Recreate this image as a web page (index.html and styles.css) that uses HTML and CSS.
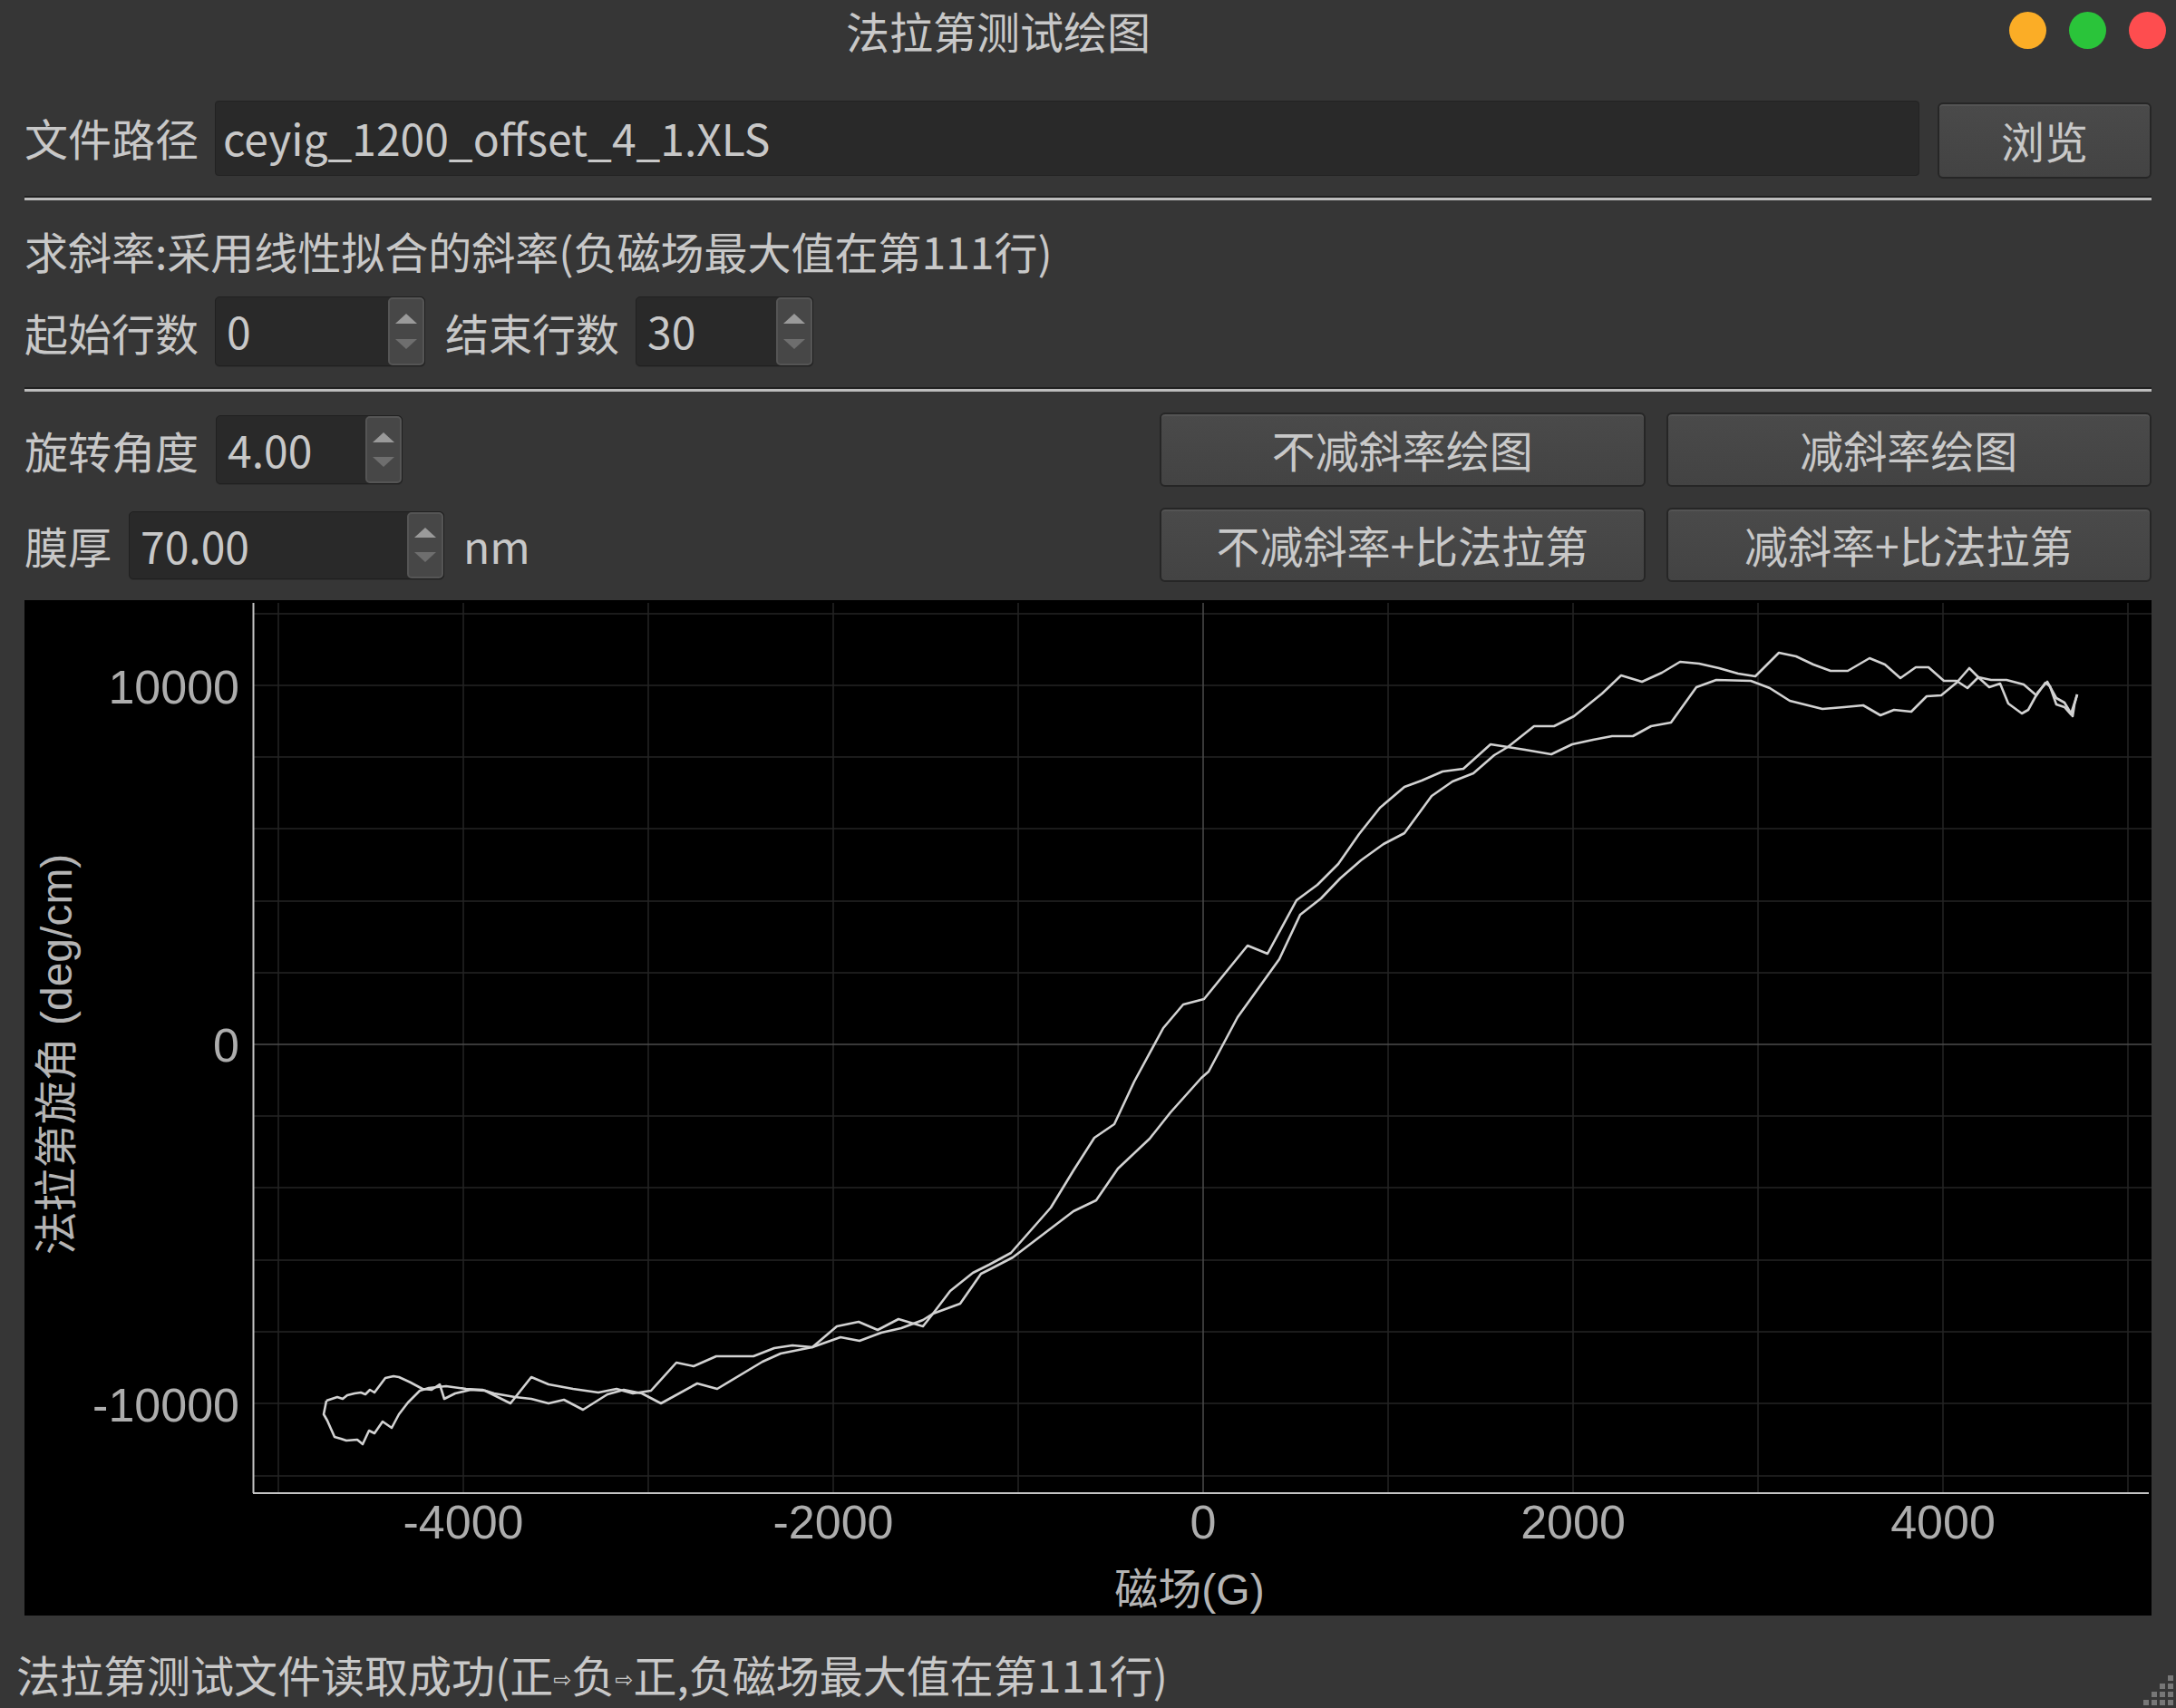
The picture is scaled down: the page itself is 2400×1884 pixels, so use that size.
FILE: index.html
```html
<!DOCTYPE html>
<html lang="zh-CN">
<head>
  <meta charset="UTF-8">
  <meta name="viewport" content="width=device-width, initial-scale=1.0">
  <title>法拉第测试绘图</title>
  <link rel="stylesheet" href="styles.css">
</head>
<body>
  <div class="window">
    <div class="titlebar">
      <div class="title">法拉第测试绘图</div>
      <div class="lights">
        <span class="light orange"></span>
        <span class="light green"></span>
        <span class="light red"></span>
      </div>
    </div>

    <div class="content">
      <div class="file-row">
        <span class="label">文件路径</span>
        <div class="path">ceyig_1200_offset_4_1.XLS</div>
        <div class="btn browse">浏览</div>
      </div>

      <div class="sep first"></div>

      <div class="slope">求斜率:采用线性拟合的斜率(负磁场最大值在第111行)</div>

      <div class="range-row">
        <span class="label">起始行数</span>
        <div class="spin w-start"><span class="val">0</span><span class="arrows"><i class="up"></i><i class="down"></i></span></div>
        <span class="label">结束行数</span>
        <div class="spin w-end"><span class="val">30</span><span class="arrows"><i class="up"></i><i class="down"></i></span></div>
      </div>

      <div class="sep second"></div>

      <div class="controls">
        <div class="params">
          <div class="param">
            <span class="label">旋转角度</span>
            <div class="spin w-angle"><span class="val">4.00</span><span class="arrows"><i class="up"></i><i class="down"></i></span></div>
          </div>
          <div class="param">
            <span class="label">膜厚</span>
            <div class="spin w-thick"><span class="val">70.00</span><span class="arrows"><i class="up"></i><i class="down"></i></span></div>
            <span class="unit">nm</span>
          </div>
        </div>
        <div class="actions">
          <div class="btn">不减斜率绘图</div>
          <div class="btn">减斜率绘图</div>
          <div class="btn">不减斜率+比法拉第</div>
          <div class="btn">减斜率+比法拉第</div>
        </div>
      </div>

      <div class="plot">
        <svg width="2346" height="1120" viewBox="27 662 2346 1120">
          <g class="grid">
            <line x1="307" y1="665" x2="307" y2="1647"/>
            <line x1="511" y1="665" x2="511" y2="1647"/>
            <line x1="715" y1="665" x2="715" y2="1647"/>
            <line x1="919" y1="665" x2="919" y2="1647"/>
            <line x1="1123" y1="665" x2="1123" y2="1647"/>
            <line x1="1531" y1="665" x2="1531" y2="1647"/>
            <line x1="1735" y1="665" x2="1735" y2="1647"/>
            <line x1="1939" y1="665" x2="1939" y2="1647"/>
            <line x1="2143" y1="665" x2="2143" y2="1647"/>
            <line x1="2347" y1="665" x2="2347" y2="1647"/>
            <line x1="279" y1="677" x2="2373" y2="677"/>
            <line x1="279" y1="756" x2="2373" y2="756"/>
            <line x1="279" y1="835" x2="2373" y2="835"/>
            <line x1="279" y1="914" x2="2373" y2="914"/>
            <line x1="279" y1="994" x2="2373" y2="994"/>
            <line x1="279" y1="1073" x2="2373" y2="1073"/>
            <line x1="279" y1="1231" x2="2373" y2="1231"/>
            <line x1="279" y1="1310" x2="2373" y2="1310"/>
            <line x1="279" y1="1390" x2="2373" y2="1390"/>
            <line x1="279" y1="1469" x2="2373" y2="1469"/>
            <line x1="279" y1="1548" x2="2373" y2="1548"/>
            <line x1="279" y1="1628" x2="2373" y2="1628"/>
          </g>
          <g class="zero">
            <line x1="1327" y1="665" x2="1327" y2="1647"/>
            <line x1="279" y1="1152" x2="2373" y2="1152"/>
          </g>
          <g class="axis">
            <line x1="279.5" y1="665" x2="279.5" y2="1647"/>
            <line x1="279" y1="1647" x2="2370" y2="1647"/>
          </g>

          <!-- 正 -> 负 -->
          <polyline class="trace" points="360,1545 366,1543 372,1541 378,1543 383,1539 391,1537 398,1536 403,1538 408,1533 413,1536 425,1520 434,1518 440,1519 453,1525 466,1532 476,1533 485,1527 490,1543 502,1537 519,1533 535,1534 563,1548 586,1519 605,1527 632,1532 660,1536 680,1532 698,1537 718,1534 746,1503 765,1507 790,1496 831,1496 854,1487 874,1484 896,1486 923,1463 947,1458 968,1467 991,1455 1018,1463 1029,1449 1048,1424 1073,1404 1091,1395 1115,1382 1159,1332 1184,1291 1207,1255 1229,1240 1251,1193 1283,1134 1305,1108 1328,1102 1376,1043 1398,1052 1430,993 1453,976 1476,953 1499,920 1522,891 1549,868 1568,861 1591,851 1614,848 1644,821 1682,827 1711,832 1734,821 1757,816 1778,812 1801,812 1821,801 1843,797 1871,758 1893,750 1931,751 1952,759 1974,773 2010,782 2034,780 2055,778 2074,789 2089,783 2108,785 2125,768 2141,767 2158,753 2172,737 2184,749 2194,758 2206,754 2215,776 2230,787 2237,783 2248,763 2258,752 2268,770 2277,775 2286,790 2288,777 2291,766"/>
          <!-- 负 -> 正 -->
          <polyline class="trace" points="360,1545 357,1560 361,1567 369,1585 376,1587 382,1589 394,1588 400,1593 407,1578 413,1581 422,1568 432,1575 440,1560 450,1547 463,1534 473,1531 492,1529 514,1532 532,1533 545,1537 568,1541 586,1543 605,1548 622,1544 643,1555 670,1538 688,1533 708,1537 729,1548 769,1526 791,1532 841,1502 861,1493 896,1486 927,1475 948,1479 972,1470 994,1465 1018,1456 1029,1449 1059,1438 1082,1405 1092,1400 1117,1387 1184,1336 1209,1324 1233,1289 1268,1256 1291,1227 1325,1189 1333,1182 1365,1122 1411,1058 1434,1009 1457,991 1478,969 1501,949 1526,931 1549,919 1579,878 1602,862 1625,853 1648,833 1663,824 1692,801 1714,801 1736,790 1767,765 1788,745 1811,752 1833,742 1853,730 1874,732 1896,737 1917,743 1936,746 1962,720 1981,724 2000,733 2019,740 2038,740 2062,726 2079,733 2096,748 2113,736 2127,736 2144,751 2158,751 2170,759 2182,747 2196,750 2213,750 2232,755 2246,767 2256,753 2261,757 2268,777 2277,780 2284,788 2291,766"/>

          <g class="ticks-y">
            <text x="264" y="776">10000</text>
            <text x="264" y="1171">0</text>
            <text x="264" y="1568">-10000</text>
          </g>
          <g class="ticks-x">
            <text x="511" y="1697">-4000</text>
            <text x="919" y="1697">-2000</text>
            <text x="1327" y="1697">0</text>
            <text x="1735" y="1697">2000</text>
            <text x="2143" y="1697">4000</text>
          </g>
          <text class="axis-title" x="1312" y="1770">磁场(G)</text>
          <text class="axis-title" transform="translate(79 1163) rotate(-90)">法拉第旋角 (deg/cm)</text>
        </svg>
      </div>
    </div>

    <div class="status">法拉第测试文件读取成功(正<span class="arrow">⇨</span>负<span class="arrow">⇨</span>正,负磁场最大值在第111行)</div>

    <svg class="grip" width="40" height="40" viewBox="0 0 40 40">
      <rect x="31" y="4" width="6" height="6"/>
      <rect x="22" y="13" width="6" height="6"/>
      <rect x="31" y="13" width="6" height="6"/>
      <rect x="13" y="22" width="6" height="6"/>
      <rect x="22" y="22" width="6" height="6"/>
      <rect x="31" y="22" width="6" height="6"/>
      <rect x="4" y="31" width="6" height="6"/>
      <rect x="13" y="31" width="6" height="6"/>
      <rect x="22" y="31" width="6" height="6"/>
      <rect x="31" y="31" width="6" height="6"/>
    </svg>
  </div>
</body>
</html>
```

FILE: styles.css
```css
* { box-sizing: border-box; }

html, body {
  margin: 0;
  padding: 0;
}

body {
  width: 2400px;
  height: 1884px;
  overflow: hidden;
  background: #363636;
  color: #c8c8c8;
  font-family: "Noto Sans CJK SC", "Liberation Sans", sans-serif;
  font-size: 48px;
}

.window {
  position: relative;
  display: flex;
  flex-direction: column;
  height: 1884px;
}

/* title bar */
.titlebar {
  display: flex;
  align-items: center;
  height: 66px;
}

.title {
  flex: 1;
  text-align: center;
  line-height: 64px;
  padding-right: 14px;
}

.lights {
  display: flex;
  gap: 25px;
  padding-right: 11px;
}

.light {
  width: 41px;
  height: 41px;
  border-radius: 50%;
}

.orange { background: #fbad26; }
.green { background: #2ac43a; }
.red { background: #fe4d4f; }

/* form */
.content {
  display: flex;
  flex-direction: column;
  padding: 0 27px;
}

.label {
  line-height: 60px;
  white-space: nowrap;
}

.file-row {
  display: flex;
  align-items: flex-start;
  gap: 18px;
  margin-top: 45px;
}

.file-row .label {
  line-height: 81px;
}

.path {
  flex: 1;
  height: 83px;
  line-height: 79px;
  padding-left: 8px;
  background: #292929;
  border: 1px solid #222;
  border-radius: 4px;
  margin-right: 2px;
}

.btn {
  display: flex;
  align-items: center;
  justify-content: center;
  height: 82px;
  padding-bottom: 2px;
  background: linear-gradient(#4a4a4a, #434343);
  border: 2px solid #262626;
  border-radius: 6px;
  box-shadow: inset 0 2px 0 #545454;
  white-space: nowrap;
}

.browse {
  width: 236px;
  height: 84px;
  margin-top: 2px;
}

.sep {
  height: 5px;
  border-top: 2px solid #1f1f1f;
  background: #bdbdbd;
}

.sep.first { margin-top: 19px; }
.sep.second { margin-top: 23px; }

.slope {
  margin-top: 25px;
  line-height: 60px;
}

.range-row {
  display: flex;
  align-items: center;
  gap: 18px;
  margin-top: 21px;
}

.range-row .spin + .label {
  margin-left: 4px;
}

/* spin boxes */
.spin {
  display: flex;
  height: 77px;
  background: #292929;
  border: 1px solid #202020;
  border-radius: 5px;
  box-shadow: 0 1px 0 #2e2e2e;
}

.spin .val {
  flex: 1;
  line-height: 73px;
  padding-left: 12px;
}

.spin .arrows {
  width: 40px;
  display: flex;
  flex-direction: column;
  align-items: center;
  justify-content: space-evenly;
  background: #474747;
  border: 2px solid #555;
  border-radius: 5px;
}

.arrows i {
  width: 0;
  height: 0;
  border-left: 12px solid transparent;
  border-right: 12px solid transparent;
}

.arrows .up { border-bottom: 11px solid #9a9a9a; }
.arrows .down { border-top: 11px solid #6e6e6e; }

.w-start { width: 232px; }
.w-end { width: 196px; }
.w-angle { width: 206px; height: 76px; }
.w-thick { width: 348px; height: 75px; }

.controls {
  display: flex;
  margin-top: 23px;
}

.params {
  flex: 1;
  display: flex;
  flex-direction: column;
  gap: 23px;
}

.param {
  display: flex;
  align-items: center;
  gap: 19px;
  height: 82px;
}

.unit {
  margin-left: 2px;
}

.actions {
  width: 1094px;
  display: grid;
  grid-template-columns: 1fr 1fr;
  grid-auto-rows: 82px;
  gap: 23px;
}

/* plot */
.plot {
  margin-top: 20px;
  height: 1120px;
  background: #000;
}

.plot svg {
  display: block;
}

.grid line {
  stroke: #252525;
  stroke-width: 1.5;
}

.zero line {
  stroke: #4c4c4c;
  stroke-width: 1.5;
}

.axis line {
  stroke: #c4c4c4;
  stroke-width: 2;
}

.trace {
  fill: none;
  stroke: #d2d2d2;
  stroke-width: 2.6;
  stroke-linejoin: round;
}

.plot text {
  font-family: "Liberation Sans", "Noto Sans CJK SC", sans-serif;
  font-size: 52px;
  fill: #adadad;
}

.ticks-y text { text-anchor: end; }
.ticks-x text { text-anchor: middle; }

.plot .axis-title {
  font-size: 48px;
  text-anchor: middle;
  fill: #b4b4b4;
}

/* status bar */
.status {
  padding: 34px 0 0 18px;
  line-height: 60px;
  white-space: nowrap;
}

.status .arrow {
  font-family: "DejaVu Sans", sans-serif;
  font-size: 24px;
  vertical-align: 6px;
}

.grip {
  position: absolute;
  right: 0;
  bottom: 0;
}

.grip rect {
  fill: #777;
}
```
